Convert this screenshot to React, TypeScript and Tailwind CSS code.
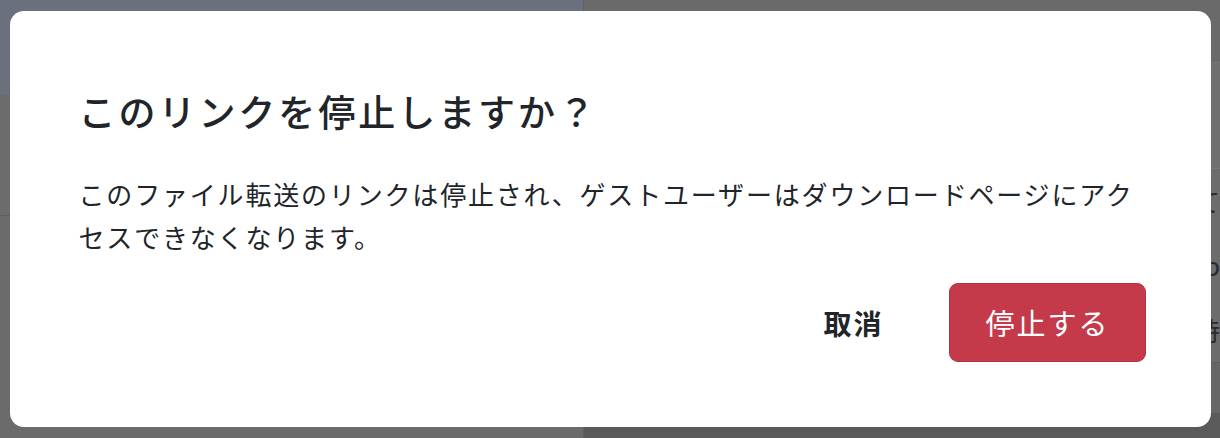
import React from "react";

// Dimmed page behind the dialog
function Backdrop() {
  return (
    <div className="flex h-full w-full">
      <div className="flex w-[583px] flex-col">
        <div className="h-[95px] bg-[#6b717c]" />
        <div className="h-[120px] bg-[#6c6c6c]" />
        <div className="h-px bg-[#5f5f5f]" />
        <div className="flex-1 bg-[#6b6b6b]" />
      </div>
      <div className="w-px bg-[#626262]" />
      <div className="flex flex-1 flex-col text-[#2a2a2a]">
        <div className="flex h-[62px] items-center justify-end bg-[#6a6a6a] pr-2 text-[22px]">ヘ</div>
        <div className="h-px bg-[#777777]" />
        <div className="h-[105px] bg-[#6f6f6f]" />
        <div className="h-px bg-[#777777]" />
        <div className="flex h-[193px] flex-col items-end justify-around bg-[#6c6c6c] text-[26px] leading-none">
          <span>て</span>
          <span>p</span>
          <span>時</span>
        </div>
        <div className="h-px bg-[#5e5e5e]" />
        <div className="h-[50px] bg-[#666666]" />
        <div className="flex-1 bg-[#5a5a5a]" />
      </div>
    </div>
  );
}

export default function App() {
  return (
    <div
      className="relative h-[438px] w-[1220px] overflow-hidden"
      style={{ fontFamily: '"Noto Sans CJK JP", "Noto Sans", sans-serif' }}
    >
      <Backdrop />

      {/* Confirm dialog */}
      <div className="absolute inset-0 flex justify-center pt-[11px]">
        <div className="flex h-[416px] w-[1201px] flex-col rounded-[14px] bg-white pb-[65px] pl-[69px] pr-[65px] pt-[73px] text-[#212529]">
          <h2 className="text-[37px] font-medium leading-[54px] tracking-[0.08em]">
            このリンクを停止しますか？
          </h2>
          <p className="mt-[34px] pr-[4px] text-[26px] leading-[43px] tracking-[0.07em]">
            このファイル転送のリンクは停止され、ゲストユーザーはダウンロードページにアクセスできなくなります。
          </p>
          <div className="mt-[25px] flex items-center justify-end gap-[32px]">
            <button className="h-[79px] px-[34px] text-[28px] font-bold tracking-[0.07em] text-[#212529]">
              取消
            </button>
            <button className="h-[79px] rounded-[9px] border border-[#b3303f] bg-[#c43a4b] px-[35px] text-[29px] tracking-[0.07em] text-white">
              停止する
            </button>
          </div>
        </div>
      </div>
    </div>
  );
}
